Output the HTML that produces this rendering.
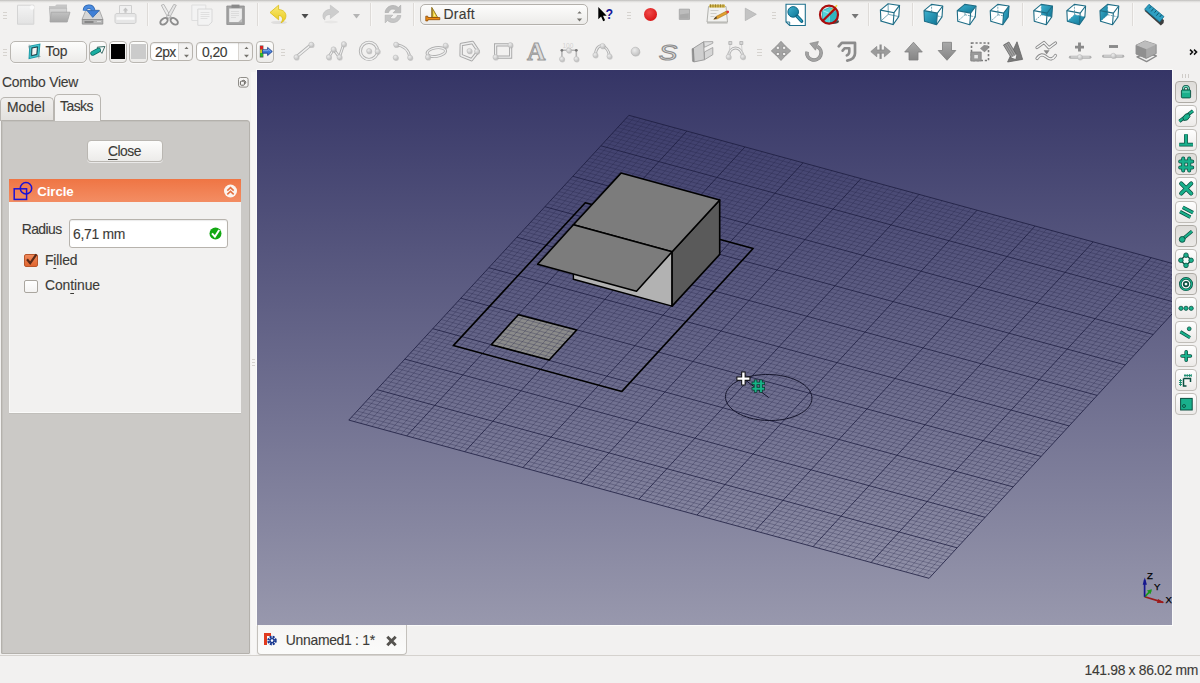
<!DOCTYPE html>
<html lang="en">
<head>
<meta charset="utf-8">
<title>FreeCAD - Draft Circle</title>
<style>
html,body{margin:0;padding:0;}
body{width:1200px;height:683px;overflow:hidden;background:#f2f1f0;position:relative;
 font-family:"Liberation Sans","DejaVu Sans",sans-serif;font-size:14.5px;color:#3c3b37;}
.abs{position:absolute;}
svg{position:absolute;display:block;overflow:visible;}
.vp{overflow:hidden;}
.t{position:absolute;white-space:nowrap;line-height:18px;height:18px;color:#3c3b37;-webkit-text-stroke:0.12px #3c3b37;}
.topline{left:0;top:0;width:1200px;height:1px;background:#dcdad7;}
.sep{position:absolute;width:1px;height:23px;background:#dedbd8;box-shadow:1px 0 0 #f8f7f6;}
.vp{left:257px;top:70px;}
/* dock */
.pane{left:1px;top:120px;width:249px;height:534px;box-sizing:border-box;background:#cbc9c6;border:1px solid #b4b1ac;border-radius:0 3px 1px 1px;box-shadow:inset 1px 1px 0 #c2c0bc;}
.tab{position:absolute;box-sizing:border-box;border:1px solid #b9b6b1;border-bottom:none;border-radius:5px 5px 0 0;}
.tab.off{left:0;top:97px;width:54px;height:24px;background:linear-gradient(#f0efed,#e2e0dd);}
.tab.on{left:54px;top:94px;width:47px;height:27px;background:#f5f4f3;}
.btn{position:absolute;box-sizing:border-box;border:1px solid #bab7b2;border-radius:4px;background:linear-gradient(#fdfdfc,#ecebe9);box-shadow:0 1px 0 rgba(255,255,255,.6);}
.hdr{left:9px;top:179px;width:232px;height:23px;background:linear-gradient(#ef7544,#f38d63);}
.grp{left:9px;top:202px;width:232px;height:211px;box-sizing:border-box;background:#f2f1f0;border-bottom:1px solid #fbfbfa;border-left:1px solid #f8f8f7;box-shadow:0 1px 0 #c1bfbb;}
.edit{position:absolute;box-sizing:border-box;background:#fff;border:1px solid #b7b3ad;border-radius:3px;box-shadow:inset 0 1px 1px rgba(0,0,0,.08);}
.chk{position:absolute;box-sizing:border-box;width:14px;height:14px;border:1px solid #aaa69f;border-radius:2px;background:linear-gradient(#fff,#f4f3f2);}
.doctab{left:257px;top:625px;width:150px;height:30px;box-sizing:border-box;border:1px solid #c4c1bc;border-top:none;border-radius:0 0 4px 4px;background:linear-gradient(#f6f5f4,#fbfbfa);}
.statusline{left:0;top:655px;width:1200px;height:1px;background:#d5d2ce;}
.tbb{position:absolute;box-sizing:border-box;width:24px;height:23px;border:1px solid #c0bdb8;border-radius:4px;background:linear-gradient(#fefefe,#eceae8);}
.tbb.dn{background:linear-gradient(#dedcd9,#ebe9e7);border-color:#aeaba5;}
.grip{position:absolute;width:4px;height:7px;background:repeating-linear-gradient(#d6d3cf 0 1px,transparent 1px 3px);}
</style>
</head>
<body>
<div class="abs" style="left:256px;top:69px;width:917px;height:557px;background:#fbfbfa;"></div>
<svg class="vp" width="915" height="555" viewBox="0 0 915 555">
<defs><linearGradient id="bg" x1="0" y1="0" x2="0" y2="1"><stop offset="0" stop-color="#353566"/><stop offset="1" stop-color="#9898ad"/></linearGradient></defs>
<rect width="915" height="555" fill="url(#bg)"/>
<polygon points="261.3,244.7 319.7,260 292.2,290 234.3,274.7" fill="#8b8b8b" stroke="none" stroke-width="0" stroke-linejoin="round" />
<path d="M377.7 46.9L97.6 351.7M369.1 48.3L949.4 206.5M383.5 48.5L103.4 353.3M366.3 51.4L946.6 209.6M389.3 50L109.2 354.8M363.5 54.4L943.8 212.6M395.1 51.6L115 356.4M360.7 57.5L941 215.7M400.9 53.2L120.8 358M357.9 60.5L938.2 218.7M406.7 54.8L126.6 359.6M355.1 63.6L935.4 221.8M412.5 56.4L132.4 361.2M352.3 66.6L932.6 224.8M418.3 58L138.2 362.8M349.5 69.7L929.8 227.9M424.1 59.5L144 364.3M346.7 72.7L927 230.9M435.7 62.7L155.6 367.5M341.1 78.8L921.4 237M441.5 64.3L161.4 369.1M338.3 81.9L918.6 240.1M447.3 65.9L167.2 370.7M335.5 84.9L915.8 243.1M453.1 67.4L173 372.2M332.7 88L913 246.2M458.9 69L178.8 373.8M329.9 91L910.2 249.2M464.7 70.6L184.6 375.4M327.1 94.1L907.4 252.3M470.6 72.2L190.5 377M324.3 97.1L904.6 255.3M476.4 73.8L196.3 378.6M321.5 100.2L901.8 258.4M482.2 75.4L202.1 380.2M318.7 103.2L899 261.4M493.8 78.5L213.7 383.3M313.1 109.3L893.4 267.5M499.6 80.1L219.5 384.9M310.3 112.4L890.6 270.6M505.4 81.7L225.3 386.5M307.5 115.4L887.8 273.6M511.2 83.3L231.1 388.1M304.7 118.5L885 276.7M517 84.8L236.9 389.6M301.9 121.5L882.2 279.7M522.8 86.4L242.7 391.2M299.1 124.5L879.4 282.7M528.6 88L248.5 392.8M296.3 127.6L876.6 285.8M534.4 89.6L254.3 394.4M293.5 130.6L873.8 288.8M540.2 91.2L260.1 396M290.7 133.7L871 291.9M551.8 94.3L271.7 399.1M285.1 139.8L865.4 298M557.6 95.9L277.5 400.7M282.3 142.8L862.6 301M563.4 97.5L283.3 402.3M279.5 145.9L859.8 304.1M569.2 99.1L289.1 403.9M276.7 148.9L857 307.1M575 100.7L294.9 405.5M273.9 152L854.2 310.2M580.8 102.3L300.7 407.1M271.1 155L851.4 313.2M586.6 103.8L306.5 408.6M268.3 158.1L848.6 316.3M592.4 105.4L312.3 410.2M265.5 161.1L845.8 319.3M598.2 107L318.1 411.8M262.7 164.2L843 322.4M609.8 110.2L329.7 415M257.1 170.3L837.4 328.5M615.6 111.7L335.5 416.5M254.3 173.3L834.6 331.5M621.4 113.3L341.3 418.1M251.5 176.4L831.8 334.6M627.2 114.9L347.1 419.7M248.7 179.4L829 337.6M633 116.5L352.9 421.3M245.9 182.5L826.2 340.7M638.8 118.1L358.7 422.9M243.1 185.5L823.4 343.7M644.6 119.7L364.5 424.5M240.3 188.6L820.6 346.8M650.4 121.2L370.3 426M237.5 191.6L817.8 349.8M656.2 122.8L376.1 427.6M234.7 194.7L815 352.9M667.9 126L387.8 430.8M229 200.7L809.3 358.9M673.7 127.6L393.6 432.4M226.2 203.8L806.5 362M679.5 129.1L399.4 433.9M223.4 206.8L803.7 365M685.3 130.7L405.2 435.5M220.6 209.9L800.9 368.1M691.1 132.3L411 437.1M217.8 212.9L798.1 371.1M696.9 133.9L416.8 438.7M215 216L795.3 374.2M702.7 135.5L422.6 440.3M212.2 219L792.5 377.2M708.5 137.1L428.4 441.9M209.4 222.1L789.7 380.3M714.3 138.6L434.2 443.4M206.6 225.1L786.9 383.3M725.9 141.8L445.8 446.6M201 231.2L781.3 389.4M731.7 143.4L451.6 448.2M198.2 234.3L778.5 392.5M737.5 145L457.4 449.8M195.4 237.3L775.7 395.5M743.3 146.5L463.2 451.3M192.6 240.4L772.9 398.6M749.1 148.1L469 452.9M189.8 243.4L770.1 401.6M754.9 149.7L474.8 454.5M187 246.5L767.3 404.7M760.7 151.3L480.6 456.1M184.2 249.5L764.5 407.7M766.5 152.9L486.4 457.7M181.4 252.6L761.7 410.8M772.3 154.5L492.2 459.3M178.6 255.6L758.9 413.8M783.9 157.6L503.8 462.4M173 261.7L753.3 419.9M789.7 159.2L509.6 464M170.2 264.8L750.5 423M795.5 160.8L515.4 465.6M167.4 267.8L747.7 426M801.3 162.4L521.2 467.2M164.6 270.9L744.9 429.1M807.1 163.9L527 468.8M161.8 273.9L742.1 432.1M812.9 165.5L532.8 470.3M159 276.9L739.3 435.1M818.7 167.1L538.6 471.9M156.2 280L736.5 438.2M824.5 168.7L544.4 473.5M153.4 283L733.7 441.2M830.3 170.3L550.2 475.1M150.6 286.1L730.9 444.3M841.9 173.4L561.8 478.2M145 292.2L725.3 450.4M847.7 175L567.6 479.8M142.2 295.2L722.5 453.4M853.5 176.6L573.4 481.4M139.4 298.3L719.7 456.5M859.4 178.2L579.3 483M136.6 301.3L716.9 459.5M865.2 179.8L585.1 484.6M133.8 304.4L714.1 462.6M871 181.4L590.9 486.2M131 307.4L711.3 465.6M876.8 182.9L596.7 487.7M128.2 310.5L708.5 468.7M882.6 184.5L602.5 489.3M125.4 313.5L705.7 471.7M888.4 186.1L608.3 490.9M122.6 316.6L702.9 474.8M900 189.3L619.9 494.1M117 322.7L697.3 480.9M905.8 190.8L625.7 495.6M114.2 325.7L694.5 483.9M911.6 192.4L631.5 497.2M111.4 328.8L691.7 487M917.4 194L637.3 498.8M108.6 331.8L688.9 490M923.2 195.6L643.1 500.4M105.8 334.9L686.1 493.1M929 197.2L648.9 502M103 337.9L683.3 496.1M934.8 198.8L654.7 503.6M100.2 341L680.5 499.2M940.6 200.3L660.5 505.1M97.4 344L677.7 502.2M946.4 201.9L666.3 506.7M94.6 347.1L674.9 505.3" stroke="#232346" stroke-opacity="0.45" stroke-width="0.7" fill="none"/>
<path d="M371.9 45.3L91.8 350.1M371.9 45.3L952.2 203.5M429.9 61.1L149.8 365.9M343.9 75.8L924.2 234M488 76.9L207.9 381.7M315.9 106.3L896.2 264.5M546 92.8L265.9 397.6M287.9 136.7L868.2 294.9M604 108.6L323.9 413.4M259.9 167.2L840.2 325.4M662 124.4L381.9 429.2M231.8 197.7L812.1 355.9M720.1 140.2L440 445M203.8 228.2L784.1 386.4M778.1 156L498 460.8M175.8 258.7L756.1 416.9M836.1 171.9L556 476.7M147.8 289.1L728.1 447.3M894.2 187.7L614.1 492.5M119.8 319.6L700.1 477.8M952.2 203.5L672.1 508.3M91.8 350.1L672.1 508.3" stroke="#1d1d40" stroke-opacity="0.8" stroke-width="1" fill="none"/>
<polygon points="261.3,244.7 319.7,260 292.2,290 234.3,274.7" fill="none" stroke="#000" stroke-width="1.6" stroke-linejoin="round" />
<polygon points="328.3,132.8 496.1,178.5 364.9,321.4 196.3,275.6" fill="none" stroke="#000" stroke-width="1.6" stroke-linejoin="round" />
<polygon points="316.4,154.8 415.1,181.7 415.1,236.1 316.4,209.2" fill="#b2b2b2" stroke="#000" stroke-width="1.4" stroke-linejoin="round" />
<polygon points="415.1,181.7 462.7,130 462.7,184.4 415.1,236.1" fill="#5a5a5a" stroke="#000" stroke-width="1.6" stroke-linejoin="round" />
<polygon points="364,103.1 462.7,130 415.1,181.7 316.4,154.8" fill="#7c7c7c" stroke="#000" stroke-width="1.6" stroke-linejoin="round" />
<polygon points="316.4,154.8 415.1,181.7 379.5,221.3 280.6,194.3" fill="#7c7c7c" stroke="#000" stroke-width="1.6" stroke-linejoin="round" />
<polygon points="550.6,338.1 548.9,339.9 546.8,341.5 544.4,343 541.9,344.5 539,345.8 536,346.9 532.8,347.9 529.4,348.8 525.9,349.5 522.3,350 518.6,350.3 514.9,350.5 511.1,350.5 507.4,350.3 503.6,350 500,349.5 496.4,348.8 492.9,348 489.6,346.9 486.4,345.8 483.5,344.5 480.7,343.1 478.2,341.5 476,339.9 474,338.2 472.3,336.3 470.9,334.5 469.8,332.5 469,330.5 468.6,328.5 468.5,326.5 468.7,324.5 469.2,322.5 470.1,320.6 471.3,318.7 472.8,316.9 474.5,315.1 476.6,313.5 479,312 481.5,310.5 484.4,309.2 487.4,308.1 490.6,307.1 494,306.2 497.5,305.5 501.1,305 504.8,304.7 508.5,304.5 512.3,304.5 516,304.7 519.8,305 523.4,305.5 527,306.2 530.5,307 533.8,308.1 537,309.2 539.9,310.5 542.7,311.9 545.2,313.5 547.4,315.1 549.4,316.8 551.1,318.7 552.5,320.5 553.6,322.5 554.4,324.5 554.8,326.5 554.9,328.5 554.7,330.5 554.2,332.5 553.3,334.4 552.1,336.3" fill="none" stroke="#15152c" stroke-width="1" stroke-linejoin="round" />
<line x1="511.7" y1="327.5" x2="487.5" y2="309.5" stroke="#15152c" stroke-width="1"/>
<g transform="translate(501.3 316.1)" stroke-linecap="square" fill="none"><path d="M-2.7 -5V5M2.7 -5V5M-5 -2.7H5M-5 2.7H5" stroke="#0b3b2e" stroke-width="3.4"/><path d="M-2.7 -5V5M2.7 -5V5M-5 -2.7H5M-5 2.7H5" stroke="#19b389" stroke-width="1.9"/></g>
<g transform="translate(486.4 308.6)" fill="none" stroke-linecap="butt"><path d="M0 -7V7M-7 0H7" stroke="#111" stroke-width="4.4"/><path d="M0 -6V6M-6 0H6" stroke="#fff" stroke-width="2.4"/></g>
<g transform="translate(887.6 526.8)" font-family="'Liberation Sans', sans-serif" font-size="9.6" fill="#000" stroke="#000" stroke-width=".25"><path d="M0 0L18.6 5.6" stroke="#9c1a1a" stroke-width="1.7"/><path d="M19.6 5.9l-7.2 0.2 1.1-3.9z" fill="#9c1a1a" stroke="none"/><path d="M0 0L6.4 -6.4" stroke="#1a9a1a" stroke-width="1.7"/><path d="M7.4 -7.6l-1.6 5-3.4-3.6z" fill="#1a9a1a" stroke="none"/><path d="M0 0V-17" stroke="#17178f" stroke-width="1.7"/><path d="M0.2 -19.4l2.1 7.4h-4.2z" fill="#17178f" stroke="none"/><text x="2.3" y="-17.6">Z</text><text x="9.3" y="-6.6">Y</text><text x="20.9" y="6">X</text></g>
</svg>
<!-- ===== Combo View dock ===== -->
<div class="t" id="t_combo" style="left:2px;top:72.6px;font-size:13.9px;letter-spacing:-0.25px;">Combo View</div>
<svg style="left:237.5px;top:76.5px" width="11" height="11" viewBox="0 0 11 11"><rect x=".5" y=".5" width="9.6" height="9.6" rx="2" fill="#f6f5f4" stroke="#85827d" stroke-width=".9"/><rect x="2.4" y="4.2" width="4" height="4" rx=".8" fill="none" stroke="#66635f" stroke-width="1"/><path d="M4.3 3.6a2.3 2.3 0 0 1 3.2 3" fill="none" stroke="#66635f" stroke-width="1"/></svg>
<div class="tab off"></div>
<div class="abs pane"></div>
<div class="tab on"></div>
<div class="t" id="t_model" style="left:7px;top:97.8px;font-size:13.9px;letter-spacing:0.03px;">Model</div>
<div class="t" id="t_tasks" style="left:60px;top:97.4px;font-size:13.9px;letter-spacing:-0.5px;">Tasks</div>
<div class="btn" style="left:87px;top:140px;width:76px;height:22px;"></div>
<div class="t" id="t_close" style="left:108px;top:142px;font-size:13.9px;letter-spacing:-0.51px;"><span style="text-decoration:underline;text-underline-offset:3px;">C</span>lose</div>
<div class="abs hdr"></div>
<svg style="left:12px;top:180px" width="24" height="22" viewBox="0 0 24 22"><rect x="2.2" y="8.8" width="12.4" height="10.6" fill="none" stroke="#1a12d8" stroke-width="1.5"/><circle cx="14" cy="8.3" r="5.7" fill="none" stroke="#1a12d8" stroke-width="1.5"/></svg>
<div class="t" id="t_circle" style="left:37.2px;top:182.5px;font-size:13.3px;font-weight:bold;color:#fff;-webkit-text-stroke:0;letter-spacing:-0.09px;">Circle</div>
<svg style="left:223px;top:184px" width="15" height="15" viewBox="0 0 15 15"><circle cx="7.5" cy="7" r="6.5" fill="#fbf3ee"/><path d="M4.3 6.6L7.5 3.6l3.2 3M4.3 10.4l3.2-3 3.2 3" fill="none" stroke="#e46f3e" stroke-width="1.5"/></svg>
<div class="abs grp"></div>
<div class="t" id="t_radius" style="left:21.7px;top:220.1px;font-size:13.9px;letter-spacing:-0.54px;">Radius</div>
<div class="edit" style="left:69px;top:219px;width:159px;height:29px;"></div>
<div class="t" id="t_val" style="left:73.1px;top:225px;font-size:13.9px;letter-spacing:-0.32px;">6,71 mm</div>
<svg style="left:209px;top:227px" width="13" height="13" viewBox="0 0 13 13"><circle cx="6.5" cy="6.5" r="6" fill="#12a812"/><path d="M3 6.3l2.9 3.4L10.2 3" fill="none" stroke="#fff" stroke-width="2"/></svg>
<div class="chk" style="left:24px;top:253.5px;width:13.5px;height:13.5px;background:linear-gradient(#f08a5c,#e0652f);border-color:#b9562b;"></div>
<svg style="left:24px;top:252px" width="15" height="15" viewBox="0 0 15 15"><path d="M3 7.2l3.2 4L12.4 2.4" fill="none" stroke="#5a2a18" stroke-width="2.2"/></svg>
<div class="t" id="t_filled" style="left:45px;top:250.7px;font-size:13.9px;letter-spacing:-0.15px;">F<span style="text-decoration:underline;text-underline-offset:3px;">i</span>lled</div>
<div class="chk" style="left:24px;top:279.5px;width:13.5px;height:13.5px;"></div>
<div class="t" id="t_cont" style="left:45px;top:276.2px;font-size:13.9px;letter-spacing:-0.08px;">Con<span style="text-decoration:underline;text-underline-offset:3px;">t</span>inue</div>
<div class="abs" style="left:251px;top:72px;width:5px;height:583px;background:#f7f6f5;"></div>
<div class="grip" style="left:252px;top:359px;width:3px;height:8px;"></div>
<!-- ===== document tab + status bar ===== -->
<div class="abs doctab"></div>
<svg style="left:263px;top:632px" width="15" height="15" viewBox="0 0 15 15"><path d="M1 1h7v3H4v9H1z" fill="#e03a1e"/><g transform="translate(9 8.6)"><circle r="3.6" fill="none" stroke="#15358f" stroke-width="2.4" stroke-dasharray="1.9 0.95"/><circle r="2.6" fill="#15358f"/><circle r="1.3" fill="#fff"/></g></svg>
<div class="t" id="t_doc" style="left:285.8px;top:631.2px;font-size:13.9px;letter-spacing:-0.28px;">Unnamed1 : 1*</div>
<svg style="left:385px;top:635px" width="13" height="12" viewBox="0 0 13 12"><path d="M2.3 1.8l8.4 8.4M10.7 1.8l-8.4 8.4" stroke="#55534f" stroke-width="2.9" fill="none"/></svg>
<div class="abs statusline"></div>
<div class="t" id="t_status" style="top:660.7px;font-size:13.9px;letter-spacing:-0.32px;left:1084.5px;">141.98 x 86.02 mm</div>
<!-- ===== toolbar row 1 ===== -->
<div class="abs" style="left:0;top:0;width:1200px;height:3px;background:linear-gradient(#bcbbb9,#dddcda 40%,#f2f1f0);"></div>
<div class="grip" style="left:3px;top:12px;"></div>
<div class="grip" style="left:627px;top:12px;"></div>
<div class="grip" style="left:772px;top:12px;"></div>
<div class="sep" style="left:147px;top:3px;"></div>
<div class="sep" style="left:257px;top:3px;"></div>
<div class="sep" style="left:370px;top:3px;"></div>
<div class="sep" style="left:413px;top:3px;"></div>
<div class="sep" style="left:868px;top:3px;"></div>
<div class="sep" style="left:912px;top:3px;"></div>
<div class="sep" style="left:1022px;top:3px;"></div>
<div class="sep" style="left:1132px;top:3px;"></div>
<svg style="left:0;top:0" width="1200" height="32" viewBox="0 0 1200 32">
<defs>
<linearGradient id="gl" x1="0" y1="0" x2="0" y2="1"><stop offset="0" stop-color="#f4f4f4"/><stop offset="1" stop-color="#e2e2e2"/></linearGradient>
<linearGradient id="gg" x1="0" y1="0" x2="0" y2="1"><stop offset="0" stop-color="#c2c2c2"/><stop offset="1" stop-color="#a6a6a6"/></linearGradient>
<linearGradient id="teal" x1="0" y1="0" x2="1" y2="1"><stop offset="0" stop-color="#3fb2d0"/><stop offset="1" stop-color="#0f7595"/></linearGradient>
<linearGradient id="yel" x1="0" y1="0" x2="0" y2="1"><stop offset="0" stop-color="#f9ea7a"/><stop offset="1" stop-color="#e9c916"/></linearGradient>
<radialGradient id="red" cx="0.4" cy="0.35" r="0.7"><stop offset="0" stop-color="#f04a4a"/><stop offset="1" stop-color="#d81414"/></radialGradient>
</defs>
<!-- new -->
<path d="M17.5 5.2h16.3v19H17.5z" fill="url(#gl)" stroke="#d4d4d4"/><circle cx="32" cy="7.5" r="2.2" fill="#fafafa"/>
<!-- open -->
<path d="M49 6h6l1.5-1.5H67V9h-18z" fill="#c6c6c6"/><path d="M49.4 8.2h17.2V21H50.4z" fill="#d2d2d2" stroke="#b8b8b8" stroke-width=".8"/><path d="M51.2 12.2H70L67.2 22H50z" fill="url(#gg)" stroke="#a4a4a4" stroke-width=".8"/>
<!-- save -->
<path d="M85.8 10.2h13.6l3.6 9.3H82z" fill="#d6d6d6" stroke="#9c9c9c" stroke-width=".8"/><path d="M82.3 19.5h20.5v4.6H82.3z" fill="#b4b4b4" stroke="#8c8c8c" stroke-width=".8"/><path d="M84.5 22h9" stroke="#6e6e6e" stroke-width="1.3"/><path d="M97 21.5h4" stroke="#d8d8d8" stroke-width="1"/>
<path d="M84.8 10.6C85 6 91.8 4.6 93.3 10.4" fill="none" stroke="#2d64ad" stroke-width="4.2"/><path d="M84.8 10.6C85 6 91.8 4.6 93.3 10.4" fill="none" stroke="#4a8be0" stroke-width="2.8"/>
<path d="M87 10.6h12.2l-6.4 6.8z" fill="#3f7fd6" stroke="#2d64ad" stroke-width=".8" stroke-linejoin="round"/>
<!-- print -->
<path d="M119.5 5.5h12v8.5h-12z" fill="#f0f0f0" stroke="#d0d0d0"/><path d="M125.5 7.5l2.7 3h-1.6v2.2h-2.2v-2.2h-1.6z" fill="#c4c4c4"/><path d="M117 13.5h17c1.5 0 2 1 2 2v6c0 1.2-.8 2-2 2h-17c-1.2 0-2-.8-2-2v-6c0-1 .5-2 2-2z" fill="#e6e6e6" stroke="#cfcfcf"/><path d="M116.5 18.5h18" stroke="#fafafa" stroke-width="2.5"/>
<!-- cut -->
<path d="M161.3 5.2L163.8 4.4 171.2 17.2 168.3 18.3z" fill="#ececec" stroke="#a9a9a9" stroke-width=".8" stroke-linejoin="round"/>
<path d="M176.3 5.2L173.8 4.4 166.4 17.2 169.3 18.3z" fill="#e4e4e4" stroke="#a9a9a9" stroke-width=".8" stroke-linejoin="round"/>
<ellipse cx="164" cy="21.3" rx="4.1" ry="2.7" transform="rotate(-38 164 21.3)" fill="none" stroke="#8d8d8d" stroke-width="2"/><ellipse cx="174.2" cy="21.3" rx="4.1" ry="2.7" transform="rotate(38 174.2 21.3)" fill="none" stroke="#8d8d8d" stroke-width="2"/>
<circle cx="168.8" cy="15.3" r=".8" fill="#999"/>
<!-- copy -->
<path d="M191.8 5h14v15.5h-14z" fill="#f3f3f3" stroke="#dedede"/><path d="M197.8 9h14.2v13l-3.5 3.3H197.8z" fill="#f3f3f3" stroke="#d8d8d8"/><path d="M200.5 12.5h9M200.5 14.5h9M200.5 16.5h9M200.5 18.5h7" stroke="#e0e0e0"/>
<!-- paste -->
<path d="M226.8 6h17.5v18.5h-17.5z" fill="#a2a2a2" stroke="#8e8e8e" stroke-width=".8"/><path d="M229.2 8.5h12.7v13.6h-12.7z" fill="#ededed"/><path d="M231.5 4.6h8v3.3h-8z" fill="#8a8a8a"/><path d="M231 11.5h8M231 13.5h8M231 15.5h8M231 17.5h5" stroke="#dcdcdc"/><path d="M241.9 18.5v3.6h-3.6z" fill="#bdbdbd"/>
<!-- undo -->
<ellipse cx="279" cy="22.5" rx="8" ry="1.6" fill="#000" opacity=".08"/>
<path d="M278.6 5.2v4.3c5.4.3 8.3 4 7 8.3-.6 2-2 3.7-4.6 5 1.5-2 1.9-3.9 1-5.4-.7-1.3-1.7-1.8-3.4-1.9v4.3L270 12.5z" fill="url(#yel)" stroke="#dcbc14" stroke-width=".8" stroke-linejoin="round"/>
<path d="M301.5 14h7l-3.5 4.6z" fill="#4c4c4c"/>
<!-- redo -->
<ellipse cx="331" cy="22" rx="7" ry="1.4" fill="#000" opacity=".04"/>
<path d="M330.4 5.2v4.1c-5 .3-8.3 3.8-7.3 8.2.2 1 .9 2 1.7 2.5-.3-3.4 1.6-5.4 5.6-5.6v4.1L339 11.8z" fill="#cdcdcd" stroke="#c0c0c0" stroke-width=".6" stroke-linejoin="round"/>
<path d="M353 14h7l-3.5 4.6z" fill="#b4b4b4"/>
<!-- refresh -->
<path d="M385 12.5c.8-4.5 4-7 8-7 2.3 0 4 .8 5.3 2.1l2.4-2.4v7.6h-7.6l2.6-2.6c-.8-.8-1.7-1.1-2.8-1.1-2.2 0-3.7 1.3-4.3 3.4z" fill="#bcbcbc" stroke="#adadad" stroke-width=".7"/>
<path d="M400.9 15.5c-.8 4.5-4 7-8 7-2.3 0-4-.8-5.3-2.1l-2.4 2.4v-7.6h7.6l-2.6 2.6c.8.8 1.7 1.1 2.8 1.1 2.2 0 3.7-1.3 4.3-3.4z" fill="#c6c6c6" stroke="#b4b4b4" stroke-width=".7"/>
<!-- whatsthis -->
<path d="M598.3 7v12.2l2.8-2.6 2.1 4.6 1.9-.9-2.1-4.5h3.7z" fill="#000"/>
<text x="605.4" y="19" font-family="'Liberation Sans',sans-serif" font-weight="bold" font-size="15.5" fill="#17179a" textLength="7.6" lengthAdjust="spacingAndGlyphs">?</text>
<!-- macro record / stop / edit / play -->
<circle cx="650.5" cy="14.4" r="6.5" fill="url(#red)"/>
<path d="M679.3 9.2h10.2v10.2h-10.2z" fill="#bdbdbd" stroke="#a6a6a6" stroke-width=".9"/><path d="M680 14.5l8.8-1.2v5.4H680z" fill="#aaa"/>
<path d="M708.5 6.5h17.5l1.5 15.5h-20.5z" fill="#f1f1ef" stroke="#a9a9a5" stroke-width=".9"/><path d="M707 22h20.5v1.6H707z" fill="#bcbcb8"/><path d="M709.3 4.6h15.7v3h-15.7z" fill="#d2b54a"/><path d="M710.5 4.3v3M713 4.3v3M715.5 4.3v3M718 4.3v3M720.5 4.3v3M723 4.3v3" stroke="#8d7420" stroke-width=".8"/>
<path d="M710.5 10.5h8M710.5 13.5h6M710.5 16.5h4" stroke="#c9c9c5" stroke-width=".9"/>
<path d="M713.8 19.3l2.3-2.8 10-5.2 1.2 2.3-10 5.2z" fill="#e2a12d" stroke="#a86e12" stroke-width=".6"/><path d="M726.1 11.3l1.2 2.3 1.2-.7c.6-.4.7-1 .4-1.6-.3-.6-1-.9-1.6-.6z" fill="#e03a3a"/><path d="M713.8 19.3l2.3-2.8.9 1.8z" fill="#333"/>
<path d="M745.3 8.2l11 6.1-11 6.3z" fill="#c3c3c3" stroke="#b2b2b2" stroke-width=".8"/>
<!-- zoom fit -->
<path d="M786 4.3h19.3v21.2h-15.6L786 22z" fill="#fff" stroke="#1d6f8c" stroke-width="1.1"/><path d="M786 22l3.7 0 0 3.5" fill="none" stroke="#1d6f8c" stroke-width=".9"/>
<circle cx="793.2" cy="11.9" r="5.3" fill="url(#teal)" stroke="#0e6482" stroke-width="1"/><path d="M797 16.2l4.6 5" stroke="#0e6482" stroke-width="3.4" stroke-linecap="round"/><path d="M797.3 16.5l4 4.4" stroke="#2a9bbb" stroke-width="1.6" stroke-linecap="round"/>
<!-- draw style -->
<ellipse cx="833" cy="21.5" rx="6" ry="2.6" fill="#1a1a1a" opacity=".8"/>
<path d="M822.5 10.5l7-3 8 2.5v10.5l-8 3.5-7-3.5z" fill="#53d3d9" stroke="#1a9aa6" stroke-width=".7"/><path d="M822.5 10.5l7 3 8-3.5M829.5 13.5V24" fill="none" stroke="#bff3f5" stroke-width=".8"/><path d="M829.5 13.5l8-3.5v10.5l-8 3.5z" fill="#2fb5c0"/>
<path d="M830.5 12l6.5-6.8" stroke="#f0d63a" stroke-width="1.6"/>
<circle cx="829" cy="14.7" r="9" fill="none" stroke="#a90e0e" stroke-width="2.2"/><path d="M822.6 21l12.8-12.6" stroke="#a90e0e" stroke-width="2.2"/>
<path d="M851.6 14h7.1l-3.55 4.6z" fill="#767676"/>
<!-- ruler -->
<path d="M1144.5 10.8l2.4-2.4 17 11.5-.3 3.2-2.8 2.3z" fill="#3d3d3d"/><path d="M1144.6 9.3l4.4-5 15 12.3-4.3 5.3z" fill="#2e9fc2" stroke="#156f8e" stroke-width=".8"/><path d="M1151 6.4l-1.7 2M1153.6 8.5l-2.4 2.9M1156.2 10.7l-1.7 2M1158.8 12.8l-2.4 2.9M1161.4 15l-1.7 2" stroke="#0d4a60" stroke-width=".9"/>
<!-- view cubes -->
<g transform="translate(877.6 -0.7) scale(1.02)"><polygon points="2.75,10.6 10.25,4.4 21.5,6 20.75,16.9 15.25,24.75 3.25,21.25" fill="#fff" stroke="none"/><path d="M10.5 14.75 L10.25 4.4 M10.5 14.75 L20.75 16.9 M10.5 14.75 L3.25 21.25" fill="none" stroke="#3b8298" stroke-width=".7" /><polygon points="2.75,10.6 10.25,4.4 21.5,6 20.75,16.9 15.25,24.75 3.25,21.25" fill="none" stroke="#1e6d86" stroke-width="1.1"/><path d="M2.75 10.6 L16.1 13.1 L15.25 24.75 M16.1 13.1 L21.5 6" fill="none" stroke="#1e6d86" stroke-width="1.1"/></g>
<g transform="translate(921.25 0)" stroke-linejoin="round"><polygon points="2.75,10.6 10.25,4.4 21.5,6 20.75,16.9 15.25,24.75 3.25,21.25" fill="#fff" stroke="none"/><path d="M10.5 14.75 L10.25 4.4 M10.5 14.75 L20.75 16.9 M10.5 14.75 L3.25 21.25" fill="none" stroke="#3b8298" stroke-width=".7" stroke-dasharray="2 1"/><polygon points="2.75,10.6 16.1,13.1 15.25,24.75 3.25,21.25" fill="url(#teal)" stroke="none"/><polygon points="2.75,10.6 10.25,4.4 21.5,6 20.75,16.9 15.25,24.75 3.25,21.25" fill="none" stroke="#1e6d86" stroke-width="1.1"/><path d="M2.75 10.6 L16.1 13.1 L15.25 24.75 M16.1 13.1 L21.5 6" fill="none" stroke="#1e6d86" stroke-width="1.1"/></g>
<g transform="translate(954.5 0)" stroke-linejoin="round"><polygon points="2.75,10.6 10.25,4.4 21.5,6 20.75,16.9 15.25,24.75 3.25,21.25" fill="#fff" stroke="none"/><path d="M10.5 14.75 L10.25 4.4 M10.5 14.75 L20.75 16.9 M10.5 14.75 L3.25 21.25" fill="none" stroke="#3b8298" stroke-width=".7" stroke-dasharray="2 1"/><polygon points="2.75,10.6 16.1,13.1 21.5,6 10.25,4.4" fill="url(#teal)" stroke="none"/><polygon points="2.75,10.6 10.25,4.4 21.5,6 20.75,16.9 15.25,24.75 3.25,21.25" fill="none" stroke="#1e6d86" stroke-width="1.1"/><path d="M2.75 10.6 L16.1 13.1 L15.25 24.75 M16.1 13.1 L21.5 6" fill="none" stroke="#1e6d86" stroke-width="1.1"/></g>
<g transform="translate(987.5 0)" stroke-linejoin="round"><polygon points="2.75,10.6 10.25,4.4 21.5,6 20.75,16.9 15.25,24.75 3.25,21.25" fill="#fff" stroke="none"/><path d="M10.5 14.75 L10.25 4.4 M10.5 14.75 L20.75 16.9 M10.5 14.75 L3.25 21.25" fill="none" stroke="#3b8298" stroke-width=".7" stroke-dasharray="2 1"/><polygon points="16.1,13.1 21.5,6 20.75,16.9 15.25,24.75" fill="url(#teal)" stroke="none"/><polygon points="2.75,10.6 10.25,4.4 21.5,6 20.75,16.9 15.25,24.75 3.25,21.25" fill="none" stroke="#1e6d86" stroke-width="1.1"/><path d="M2.75 10.6 L16.1 13.1 L15.25 24.75 M16.1 13.1 L21.5 6" fill="none" stroke="#1e6d86" stroke-width="1.1"/></g>
<g transform="translate(1031 0)" stroke-linejoin="round"><polygon points="2.75,10.6 10.25,4.4 21.5,6 20.75,16.9 15.25,24.75 3.25,21.25" fill="#fff" stroke="none"/><path d="M10.5 14.75 L10.25 4.4 M10.5 14.75 L20.75 16.9 M10.5 14.75 L3.25 21.25" fill="none" stroke="#3b8298" stroke-width=".7" stroke-dasharray="2 1"/><polygon points="10.25,4.4 21.5,6 20.75,16.9 10.5,14.75" fill="url(#teal)" stroke="none"/><polygon points="2.75,10.6 10.25,4.4 21.5,6 20.75,16.9 15.25,24.75 3.25,21.25" fill="none" stroke="#1e6d86" stroke-width="1.1"/><path d="M2.75 10.6 L16.1 13.1 L15.25 24.75 M16.1 13.1 L21.5 6" fill="none" stroke="#1e6d86" stroke-width="1.1"/></g>
<g transform="translate(1064.1 0)" stroke-linejoin="round"><polygon points="2.75,10.6 10.25,4.4 21.5,6 20.75,16.9 15.25,24.75 3.25,21.25" fill="#fff" stroke="none"/><path d="M10.5 14.75 L10.25 4.4 M10.5 14.75 L20.75 16.9 M10.5 14.75 L3.25 21.25" fill="none" stroke="#3b8298" stroke-width=".7" stroke-dasharray="2 1"/><polygon points="3.25,21.25 15.25,24.75 20.75,16.9 10.5,14.75" fill="url(#teal)" stroke="none"/><polygon points="2.75,10.6 10.25,4.4 21.5,6 20.75,16.9 15.25,24.75 3.25,21.25" fill="none" stroke="#1e6d86" stroke-width="1.1"/><path d="M2.75 10.6 L16.1 13.1 L15.25 24.75 M16.1 13.1 L21.5 6" fill="none" stroke="#1e6d86" stroke-width="1.1"/></g>
<g transform="translate(1097.25 0)" stroke-linejoin="round"><polygon points="2.75,10.6 10.25,4.4 21.5,6 20.75,16.9 15.25,24.75 3.25,21.25" fill="#fff" stroke="none"/><path d="M10.5 14.75 L10.25 4.4 M10.5 14.75 L20.75 16.9 M10.5 14.75 L3.25 21.25" fill="none" stroke="#3b8298" stroke-width=".7" stroke-dasharray="2 1"/><polygon points="2.75,10.6 10.25,4.4 10.5,14.75 3.25,21.25" fill="url(#teal)" stroke="none"/><polygon points="2.75,10.6 10.25,4.4 21.5,6 20.75,16.9 15.25,24.75 3.25,21.25" fill="none" stroke="#1e6d86" stroke-width="1.1"/><path d="M2.75 10.6 L16.1 13.1 L15.25 24.75 M16.1 13.1 L21.5 6" fill="none" stroke="#1e6d86" stroke-width="1.1"/></g>
</svg>
<!-- workbench combo -->
<div class="btn" style="left:420px;top:4px;width:168px;height:21px;border-radius:5px;border-color:#b3b0ab;"></div>
<svg style="left:425px;top:6px" width="16" height="16" viewBox="0 0 16 16"><path d="M6.8 1v11" stroke="#8a6d1a" stroke-width="1"/><path d="M7.3 2.2l5.4 9.3H7.3z" fill="#efd23e" stroke="#8a6d1a" stroke-width=".9"/><path d="M9 7.5l1.2 2.2H9z" fill="#fff7c8"/><path d="M.8 10.2h2v1.3h12v2.2H2.8v1.2h-2z" fill="#f08c12" stroke="#8a4a05" stroke-width=".8"/></svg>
<div class="t" id="t_draft" style="left:443.5px;top:5.1px;font-size:13.9px;letter-spacing:0.28px;">Draft</div>
<svg style="left:575px;top:9px" width="9" height="14" viewBox="0 0 9 14"><path d="M2.3 4.6L4.5 2.2l2.2 2.4zM1.9 9.6h5.2L4.5 12.4z" fill="#75736e"/></svg>

<!-- ===== toolbar row 2 (Draft tray + tools) ===== -->

<div class="grip" style="left:3px;top:49px;height:7px;"></div>
<div class="grip" style="left:281px;top:49px;height:7px;width:4px;"></div>
<div class="grip" style="left:757px;top:49px;height:7px;width:5px;"></div>
<div class="btn" style="left:10px;top:41px;width:77px;height:22px;border-radius:5px;"></div>
<svg style="left:28px;top:44px" width="14" height="15" viewBox="0 0 14 15"><path d="M2.6 2.8l8.3-1.6-.9 10.4-8 1.8z" fill="none" stroke="#1b98a4" stroke-width="2.8"/><path d="M4 4l5.4-1-.6 7.4-5.2 1.2z" fill="none" stroke="#10323a" stroke-width=".9"/><path d="M2.6 2.8l8.3-1.6-.9 10.4-8 1.8z" fill="none" stroke="#62dde2" stroke-width=".7"/><path d="M1.2 .6v4M.2 2.8h3M10.8 11v3.5M9 12.5h3.5" stroke="#6b8f94" stroke-width=".6"/></svg>
<div class="t" id="t_top" style="left:45.6px;top:42px;font-size:13.9px;letter-spacing:-0.24px;">Top</div>
<div class="btn" style="left:89px;top:41px;width:18px;height:22px;"></div>
<svg style="left:89px;top:41px" width="18" height="22" viewBox="89 41 18 22"><path d="M97.2 47.2L104.9 46.5 101.9 53.4 100.3 51.2 98.6 50z" fill="#f3fbfa" stroke="#2a5c57" stroke-width=".9" stroke-linejoin="round"/><path d="M92.7 53.3L98.6 50.1" stroke="#0d6b63" stroke-width="4.8" stroke-linecap="round"/><path d="M92.7 53.3L98.6 50.1" stroke="#1aaea2" stroke-width="3.3" stroke-linecap="round"/></svg>
<div class="btn" style="left:109px;top:41px;width:18px;height:22px;"></div><div class="abs" style="left:111px;top:44px;width:14px;height:15px;background:#000;"></div>
<div class="btn" style="left:129px;top:41px;width:19px;height:22px;"></div><div class="abs" style="left:131px;top:44px;width:15px;height:15px;background:#cbcbcb;"></div>
<div class="edit" style="left:150px;top:42px;width:43px;height:19px;border-radius:4px;background:linear-gradient(90deg,#fff 0 27px,#d9d6d2 27px 28px,#f3f2f1 28px);"></div>
<div class="t" id="t_px" style="left:155px;top:43px;font-size:13.9px;letter-spacing:-0.6px;">2px</div>
<svg style="left:182px;top:45px" width="9" height="14" viewBox="0 0 9 14"><path d="M2.5 4l2-2.2 2 2.2zM2 9.8h5L4.5 12.4z" fill="#75736e"/></svg>
<div class="edit" style="left:196px;top:42px;width:57px;height:19px;border-radius:4px;background:linear-gradient(90deg,#fff 0 41px,#d9d6d2 41px 42px,#f3f2f1 42px);"></div>
<div class="t" id="t_020" style="left:201.9px;top:43px;font-size:13.9px;letter-spacing:-0.51px;">0,20</div>
<svg style="left:241.5px;top:45px" width="9" height="14" viewBox="0 0 9 14"><path d="M2.5 4l2-2.2 2 2.2zM2 9.8h5L4.5 12.4z" fill="#75736e"/></svg>
<div class="btn" style="left:256px;top:41px;width:18px;height:22px;"></div>
<svg style="left:259px;top:45px" width="14" height="13" viewBox="0 0 14 13"><path d="M.8 .5h3.6v12H.8z" fill="#555"/><path d="M1.3 1h2.6v3.6H1.3z" fill="#e81c1c"/><path d="M1.3 4.6h2.6v3.4H1.3z" fill="#f2e21a"/><path d="M1.3 8h2.6v3.5H1.3z" fill="#27c427"/><path d="M3.3 4.8h5.3V2.4l4.7 4.1-4.7 4.1V8.2H3.3z" fill="#3a76d6" stroke="#153a86" stroke-width=".8" stroke-linejoin="round"/><path d="M4 5.6h5.2V4.2l2.6 2.3" fill="none" stroke="#8db4ee" stroke-width=".8"/></svg>
<svg style="left:0;top:34px" width="1200" height="36" viewBox="0 34 1200 36">
<defs>
<radialGradient id="ball" cx="0.4" cy="0.35" r="0.75"><stop offset="0" stop-color="#ececec"/><stop offset="1" stop-color="#bcbcbc"/></radialGradient>
<linearGradient id="gd" x1="0" y1="0" x2="0" y2="1"><stop offset="0" stop-color="#a9a9a9"/><stop offset="1" stop-color="#858585"/></linearGradient>

</defs>
<g fill="none" stroke-linecap="round">
<!-- line -->
<path d="M296.3 57.1L311.3 44.6" stroke="#b2b2b2" stroke-width="3.2"/><path d="M296.3 57.1L311.3 44.6" stroke="#f0f0f0" stroke-width="1.4"/>
<!-- wire -->
<path d="M328.8 57.1L333.5 49.3 339.4 57.1 343.8 44" stroke="#b2b2b2" stroke-width="2.9"/><path d="M328.8 57.1L333.5 49.3 339.4 57.1 343.8 44" stroke="#f0f0f0" stroke-width="1.1"/>
<!-- circle -->
<circle cx="369" cy="50.9" r="8.6" stroke="#b0b0b0" stroke-width="3.2"/><circle cx="369" cy="50.9" r="8.6" stroke="#f0f0f0" stroke-width="1.4"/>
<!-- arc -->
<path d="M396 44.6Q408 46 410 57.5" stroke="#b2b2b2" stroke-width="2.9"/><path d="M396 44.6Q408 46 410 57.5" stroke="#f0f0f0" stroke-width="1.1"/>
<!-- ellipse -->
<ellipse cx="436.3" cy="52.1" rx="9.3" ry="4.3" transform="rotate(-9 436.3 52.1)" stroke="#b0b0b0" stroke-width="3"/><ellipse cx="436.3" cy="52.1" rx="9.3" ry="4.3" transform="rotate(-9 436.3 52.1)" stroke="#f0f0f0" stroke-width="1.2"/>
<!-- polygon -->
<path d="M461.3 44.5l11.2-2 5.8 8.6-6.8 8.6-10.4-4.2z" stroke="#a9a9a9" stroke-width="3.4" stroke-linejoin="round"/><path d="M461.3 44.5l11.2-2 5.8 8.6-6.8 8.6-10.4-4.2z" stroke="#eee" stroke-width="1.4" stroke-linejoin="round"/>
<!-- rectangle -->
<path d="M495.6 44.8h15v12.4h-15z" stroke="#a9a9a9" stroke-width="3.2"/><path d="M495.6 44.8h15v12.4h-15z" stroke="#eee" stroke-width="1.3"/>
<!-- dimension -->
<path d="M561.9 50.3V59M576.3 50.3V59M561.9 50.3H576.3" stroke="#b5b5b5" stroke-width="1.6"/>
<!-- bspline -->
<path d="M595.3 55C596 47 600 45 602.5 45.9S609 50 609.4 56.3" stroke="#b0b0b0" stroke-width="2.9"/><path d="M595.3 55C596 47 600 45 602.5 45.9S609 50 609.4 56.3" stroke="#f0f0f0" stroke-width="1.1"/>
<!-- bezcurve -->
<path d="M728.5 56.8C729 45 742 45 742.8 56.8" stroke="#b0b0b0" stroke-width="2.9"/><path d="M728.5 56.8C729 45 742 45 742.8 56.8" stroke="#f0f0f0" stroke-width="1.1"/>
<path d="M728.5 56.8L730.3 43M742.8 56.8L741.3 43" stroke="#c9c9c9" stroke-width=".8"/>
</g>
<g transform="translate(296.3 57.1)"><circle cx=".6" cy=".8" r="2.6" fill="#a8a8a8" opacity=".5"/><circle r="2.5" fill="url(#ball)" stroke="#bcbcbc" stroke-width=".5"/></g><g transform="translate(311.3 44.6)"><circle cx=".6" cy=".8" r="2.6" fill="#a8a8a8" opacity=".5"/><circle r="2.5" fill="url(#ball)" stroke="#bcbcbc" stroke-width=".5"/></g>
<g transform="translate(328.8 57.1)"><circle cx=".6" cy=".8" r="2.6" fill="#a8a8a8" opacity=".5"/><circle r="2.5" fill="url(#ball)" stroke="#bcbcbc" stroke-width=".5"/></g><g transform="translate(333.5 49.3)"><circle cx=".6" cy=".8" r="2.6" fill="#a8a8a8" opacity=".5"/><circle r="2.5" fill="url(#ball)" stroke="#bcbcbc" stroke-width=".5"/></g><g transform="translate(339.4 57.1)"><circle cx=".6" cy=".8" r="2.6" fill="#a8a8a8" opacity=".5"/><circle r="2.5" fill="url(#ball)" stroke="#bcbcbc" stroke-width=".5"/></g><g transform="translate(343.8 44)"><circle cx=".6" cy=".8" r="2.6" fill="#a8a8a8" opacity=".5"/><circle r="2.5" fill="url(#ball)" stroke="#bcbcbc" stroke-width=".5"/></g>
<g transform="translate(369 50.9)"><circle cx=".6" cy=".8" r="2.6" fill="#a8a8a8" opacity=".5"/><circle r="2.5" fill="url(#ball)" stroke="#bcbcbc" stroke-width=".5"/></g><g transform="translate(377.5 51.3)"><circle cx=".6" cy=".8" r="2.6" fill="#a8a8a8" opacity=".5"/><circle r="2.5" fill="url(#ball)" stroke="#bcbcbc" stroke-width=".5"/></g>
<g transform="translate(396 44.6)"><circle cx=".6" cy=".8" r="2.6" fill="#a8a8a8" opacity=".5"/><circle r="2.5" fill="url(#ball)" stroke="#bcbcbc" stroke-width=".5"/></g><g transform="translate(395.6 57.5)"><circle cx=".6" cy=".8" r="2.6" fill="#a8a8a8" opacity=".5"/><circle r="2.5" fill="url(#ball)" stroke="#bcbcbc" stroke-width=".5"/></g><g transform="translate(410 57.5)"><circle cx=".6" cy=".8" r="2.6" fill="#a8a8a8" opacity=".5"/><circle r="2.5" fill="url(#ball)" stroke="#bcbcbc" stroke-width=".5"/></g>
<g transform="translate(427.8 57.1)"><circle cx=".6" cy=".8" r="2.6" fill="#a8a8a8" opacity=".5"/><circle r="2.5" fill="url(#ball)" stroke="#bcbcbc" stroke-width=".5"/></g><g transform="translate(445.6 45.5)"><circle cx=".6" cy=".8" r="2.6" fill="#a8a8a8" opacity=".5"/><circle r="2.5" fill="url(#ball)" stroke="#bcbcbc" stroke-width=".5"/></g>
<g transform="translate(469.4 50.9)"><circle cx=".6" cy=".8" r="2.6" fill="#a8a8a8" opacity=".5"/><circle r="2.5" fill="url(#ball)" stroke="#bcbcbc" stroke-width=".5"/></g><g transform="translate(476.9 51.3)"><circle cx=".6" cy=".8" r="2.6" fill="#a8a8a8" opacity=".5"/><circle r="2.5" fill="url(#ball)" stroke="#bcbcbc" stroke-width=".5"/></g>
<g transform="translate(510.3 45)"><circle cx=".6" cy=".8" r="2.6" fill="#a8a8a8" opacity=".5"/><circle r="2.5" fill="url(#ball)" stroke="#bcbcbc" stroke-width=".5"/></g><g transform="translate(495.4 57.1)"><circle cx=".6" cy=".8" r="2.6" fill="#a8a8a8" opacity=".5"/><circle r="2.5" fill="url(#ball)" stroke="#bcbcbc" stroke-width=".5"/></g>
<text x="527" y="59.7" font-family="'Liberation Serif',serif" font-weight="bold" font-size="24.5" fill="#dedede" stroke="#999" stroke-width="1" textLength="18.5" lengthAdjust="spacingAndGlyphs">A</text>
<g transform="translate(561.9 59)"><circle cx=".6" cy=".8" r="2.6" fill="#a8a8a8" opacity=".5"/><circle r="2.5" fill="url(#ball)" stroke="#bcbcbc" stroke-width=".5"/></g><g transform="translate(576.3 59)"><circle cx=".6" cy=".8" r="2.6" fill="#a8a8a8" opacity=".5"/><circle r="2.5" fill="url(#ball)" stroke="#bcbcbc" stroke-width=".5"/></g><g transform="translate(568.8 50.3)"><circle cx=".6" cy=".8" r="2.6" fill="#a8a8a8" opacity=".5"/><circle r="2.5" fill="url(#ball)" stroke="#bcbcbc" stroke-width=".5"/></g>
<circle cx="561.9" cy="50.3" r="1.4" fill="#777"/><circle cx="576.3" cy="50.3" r="1.4" fill="#777"/>
<text x="562.5" y="47.6" font-family="'Liberation Sans',sans-serif" font-size="6.5" fill="#d2d2d2">100</text>
<g transform="translate(595.3 55)"><circle cx=".6" cy=".8" r="2.6" fill="#a8a8a8" opacity=".5"/><circle r="2.5" fill="url(#ball)" stroke="#bcbcbc" stroke-width=".5"/></g><g transform="translate(602.5 45.9)"><circle cx=".6" cy=".8" r="2.6" fill="#a8a8a8" opacity=".5"/><circle r="2.5" fill="url(#ball)" stroke="#bcbcbc" stroke-width=".5"/></g><g transform="translate(609.4 56.3)"><circle cx=".6" cy=".8" r="2.6" fill="#a8a8a8" opacity=".5"/><circle r="2.5" fill="url(#ball)" stroke="#bcbcbc" stroke-width=".5"/></g>
<circle cx="635.9" cy="52.2" r="4.4" fill="#a6a6a6" opacity=".5"/><circle cx="635.4" cy="51.5" r="4.3" fill="url(#ball)" stroke="#b5b5b5" stroke-width=".6"/>
<text x="658.8" y="59.7" font-family="'Liberation Sans',sans-serif" font-style="italic" font-size="22.5" fill="#e4e4e4" stroke="#8e8e8e" stroke-width="1.1" textLength="18.5" lengthAdjust="spacingAndGlyphs">S</text>
<!-- facebinder -->
<path d="M703.6 41.8L712.8 41.6 712.8 43.2 704.4 47.3z" fill="#e0e0e0" stroke="#9a9a9a" stroke-width=".8" stroke-linejoin="round"/>
<path d="M704.5 51.9L712.8 47.5 712.8 54.7 704.4 59.8z" fill="#d6d6d6" stroke="#9a9a9a" stroke-width=".8" stroke-linejoin="round"/>
<path d="M693.3 48.3L703.6 41.8 704.4 59.8 694 61.9z" fill="#cfcfcf" stroke="#969696" stroke-width=".9" stroke-linejoin="round"/>
<path d="M692 48.8L693.4 48.3 694 61.9 692.5 61.3z" fill="#8c8c8c" stroke="#8c8c8c" stroke-width=".6"/>
<g transform="translate(728.5 56.8)"><circle cx=".6" cy=".8" r="2.6" fill="#a8a8a8" opacity=".5"/><circle r="2.5" fill="url(#ball)" stroke="#bcbcbc" stroke-width=".5"/></g><g transform="translate(742.8 56.8)"><circle cx=".6" cy=".8" r="2.6" fill="#a8a8a8" opacity=".5"/><circle r="2.5" fill="url(#ball)" stroke="#bcbcbc" stroke-width=".5"/></g>
<path d="M728.8 41.5h3v3h-3zM739.8 41.5h3v3h-3z" fill="#d6d6d6" stroke="#a7a7a7" stroke-width=".7"/>
<!-- move -->
<path d="M781 41.3l4.6 5h-3v3.1h3.1v-3l5 4.5-5 4.6v-3h-3.1v3h3l-4.6 5-4.6-5h3v-3h-3.1v3l-5-4.6 5-4.5v3h3.1v-3.1h-3z" fill="#a3a3a3" stroke="#8b8b8b" stroke-width=".8" stroke-linejoin="round"/>
<!-- rotate -->
<path d="M807 51.7A7.1 7.1 0 1 0 817.3 46.6" fill="none" stroke="#868686" stroke-width="3.6"/><path d="M807 51.7A7.1 7.1 0 1 0 817.3 46.6" fill="none" stroke="#a2a2a2" stroke-width="2.4"/>
<path d="M809.8 43.4L818.4 41.5 815.5 50.2z" fill="#a0a0a0" stroke="#868686" stroke-width=".7" stroke-linejoin="round"/>
<!-- offset -->
<path d="M838.7 46.3L841.8 42.9H855v10.4c0 4-3 6.5-7.8 7.3" fill="none" stroke="#8c8c8c" stroke-width="2.7" stroke-linejoin="round" stroke-linecap="round"/>
<path d="M842.6 50.7L844.8 48.2h4.5v3.2c0 2-1 3.3-2.5 4" fill="none" stroke="#8c8c8c" stroke-width="2.6" stroke-linejoin="round" stroke-linecap="round"/>
<!-- trimex -->
<path d="M880.6 44.5v14.4" stroke="#8e8e8e" stroke-width="2.2"/><path d="M870.8 51.6l6-5.2v3.6h7.6v-3.6l6 5.2-6 5.2v-3.6h-7.6v3.6z" fill="#9b9b9b" stroke="#858585" stroke-width=".7"/>
<!-- upgrade / downgrade -->
<path d="M913.5 42.2l8.8 9.8h-4.3v8h-9v-8h-4.3z" fill="url(#gd)" stroke="#7d7d7d" stroke-width=".8" stroke-linejoin="round"/>
<path d="M947 60.3l8.8-9.8h-4.3v-8.2h-9v8.2h-4.3z" fill="url(#gd)" stroke="#7d7d7d" stroke-width=".8" stroke-linejoin="round"/>
<!-- scale -->
<path d="M971.5 43h17v17.5h-17z" fill="none" stroke="#7b7b7b" stroke-width="1.6" stroke-dasharray="2.2 1.8"/><path d="M970.8 52h10.4v9h-10.4z" fill="#9a9a9a" stroke="#808080" stroke-width=".8"/><path d="M974.3 55h3.6v3.4h-3.6z" fill="#e6e6e6"/><path d="M980 48.5l4-3.5 4 .5.3 3.3-3.8 3.4z" fill="#8f8f8f"/>
<!-- edit -->
<path d="M1017 41.8l5.6 17.6-15 2.6z" fill="#7a7a7a" stroke="#646464" stroke-width=".8" stroke-linejoin="round"/><path d="M1003.5 45l5.4-3 7.6 12.6-1 4.3-4.4-1.3z" fill="#9f9f9f" stroke="#5f5f5f" stroke-width=".8" stroke-linejoin="round"/><path d="M1011.1 57.6l4.4 1.3 1-4.3z" fill="#f1f1f1"/><path d="M1005.3 44l7.6 12.6M1007.1 43l7.6 12.6" stroke="#6c6c6c" stroke-width=".6"/>
<!-- wire to bspline -->
<path d="M1037 47.5l7-5 5 5.3 6.5-4.8" fill="none" stroke="#8a8a8a" stroke-width="3.2" stroke-linejoin="round" stroke-linecap="round"/><path d="M1037 47.5l7-5 5 5.3 6.5-4.8" fill="none" stroke="#f4f4f4" stroke-width="1.5" stroke-linejoin="round" stroke-linecap="round"/>
<path d="M1037 58.5c3-4.5 6-4.5 9.5-1.5s6.5 2.5 9-1.5" fill="none" stroke="#8a8a8a" stroke-width="3.2" stroke-linecap="round"/><path d="M1037 58.5c3-4.5 6-4.5 9.5-1.5s6.5 2.5 9-1.5" fill="none" stroke="#f4f4f4" stroke-width="1.5" stroke-linecap="round"/>
<path d="M1043.6 50.2h6l-3 4.2z" fill="#8a8a8a"/>
<!-- add point / del point -->
<path d="M1070.3 57.2h19.7" stroke="#b0b0b0" stroke-width="2.9" stroke-linecap="round"/><path d="M1071 57h18.5" stroke="#e9e9e9" stroke-width=".9"/><g transform="translate(1079.8 57)"><circle cx=".6" cy=".8" r="2.6" fill="#a8a8a8" opacity=".5"/><circle r="2.5" fill="url(#ball)" stroke="#bcbcbc" stroke-width=".5"/></g>
<path d="M1079.5 42.6v9M1075 47.1h9" stroke="#8a8a8a" stroke-width="2.9"/>
<path d="M1103.5 56.2h19.3" stroke="#b0b0b0" stroke-width="2.9" stroke-linecap="round"/><path d="M1104 56h18.3" stroke="#e9e9e9" stroke-width=".9"/><g transform="translate(1113.3 55.7)"><circle cx=".6" cy=".8" r="2.6" fill="#a8a8a8" opacity=".5"/><circle r="2.5" fill="url(#ball)" stroke="#bcbcbc" stroke-width=".5"/></g>
<path d="M1109 46.5h9" stroke="#8a8a8a" stroke-width="2.9"/>
<!-- shape2dview -->
<path d="M1137 56.8l9.6 4.8 9.8-5.6-8-2.8z" fill="#f0f0f0" stroke="#8a8a8a" stroke-width="1.4" stroke-linejoin="round"/>
<path d="M1136 45.2l9-4.3 11.2 3.7v9l-10 4.8-10.2-4.4z" fill="#a8a8a8" stroke="#858585" stroke-width=".8" stroke-linejoin="round"/><path d="M1136 45.2l10.2 4 10-4.6-11.2-3.7z" fill="#bdbdbd"/><path d="M1136 45.2l10.2 4v9.2l-10.2-4.4z" fill="#8f8f8f"/>
<!-- overflow chevrons -->
<path d="M1190 49.6l2.6 2.5-2.6 2.5M1194 49.6l2.6 2.5-2.6 2.5" fill="none" stroke="#111" stroke-width="1.5"/>
</svg>
<!-- ===== snap toolbar (right) ===== -->
<div class="abs" style="left:1182px;top:74px;width:8px;height:4px;background:repeating-linear-gradient(90deg,#cfccc8 0 1px,transparent 1px 3px);"></div>
<div class="tbb dn" style="left:1175px;top:81px;width:22px;height:22px;"></div>
<div class="tbb" style="left:1175px;top:105px;width:22px;height:22px;"></div>
<div class="tbb" style="left:1175px;top:129px;width:22px;height:22px;"></div>
<div class="tbb dn" style="left:1175px;top:153px;width:22px;height:22px;"></div>
<div class="tbb" style="left:1175px;top:177px;width:22px;height:22px;"></div>
<div class="tbb" style="left:1175px;top:201px;width:22px;height:22px;"></div>
<div class="tbb dn" style="left:1175px;top:225px;width:22px;height:22px;"></div>
<div class="tbb" style="left:1175px;top:249px;width:22px;height:22px;"></div>
<div class="tbb dn" style="left:1175px;top:273px;width:22px;height:22px;"></div>
<div class="tbb" style="left:1175px;top:297px;width:22px;height:22px;"></div>
<div class="tbb" style="left:1175px;top:321px;width:22px;height:22px;"></div>
<div class="tbb" style="left:1175px;top:345px;width:22px;height:22px;"></div>
<div class="tbb" style="left:1175px;top:369px;width:22px;height:22px;"></div>
<div class="tbb" style="left:1175px;top:393px;width:22px;height:22px;"></div>
<svg style="left:1174px;top:81px" width="24" height="336" viewBox="0 0 24 336">
<g transform="translate(0 0)"><path d="M9.4 9.2V8a2.6 2.6 0 0 1 5.2 0v1.2" fill="none" stroke="#0a4f40" stroke-width="2.6"/><path d="M9.4 9.2V8a2.6 2.6 0 0 1 5.2 0v1.2" fill="none" stroke="#6fd8bd" stroke-width="1.1"/><rect x="7.4" y="8.9" width="9.2" height="8" rx="1" fill="#19b08c" stroke="#0a4f40" stroke-width=".9"/><path d="M8.3 11h7.4" stroke="#6fd8bd" stroke-width=".9"/></g>
<g transform="translate(0 24)"><path d="M5.4 16.3L18.9 5.9" fill="none" stroke="#0a4f40" stroke-width="3.4" stroke-linecap="butt" /><path d="M5.4 16.3L18.9 5.9" fill="none" stroke="#19b08c" stroke-width="2" stroke-linecap="butt" /><path d="M8.8 12.5l2.6-3.3 3.6-.6 1 3-2.6 3.3-3.6.6z" fill="#19b08c" stroke="#0a4f40" stroke-width=".9"/></g>
<g transform="translate(0 48)"><path d="M12 5.2V15.5M5.3 15.6H18.9" fill="none" stroke="#0a4f40" stroke-width="3.8" stroke-linecap="butt" /><path d="M12 5.2V15.5M5.3 15.6H18.9" fill="none" stroke="#19b08c" stroke-width="2.4" stroke-linecap="butt" /></g>
<g transform="translate(0 72)"><path d="M9.2 5.5V17.5M15.2 5.5V17.5M6.2 8.5H18.2M6.2 14.5H18.2" fill="none" stroke="#0a4f40" stroke-width="4" stroke-linecap="round" /><path d="M9.2 5.5V17.5M15.2 5.5V17.5M6.2 8.5H18.2M6.2 14.5H18.2" fill="none" stroke="#19b08c" stroke-width="2.6" stroke-linecap="round" /></g>
<g transform="translate(0 96)"><path d="M7.2 6.6L17.2 16.4M17.2 6.6L7.2 16.4" fill="none" stroke="#0a4f40" stroke-width="4.2" stroke-linecap="round" /><path d="M7.2 6.6L17.2 16.4M17.2 6.6L7.2 16.4" fill="none" stroke="#19b08c" stroke-width="2.8" stroke-linecap="round" /></g>
<g transform="translate(0 120)"><path d="M8.8 6.3L19 11.7M6 10.6L16.4 16.2" fill="none" stroke="#0a4f40" stroke-width="3.6" stroke-linecap="butt" /><path d="M8.8 6.3L19 11.7M6 10.6L16.4 16.2" fill="none" stroke="#19b08c" stroke-width="2.2" stroke-linecap="butt" /></g>
<g transform="translate(0 144)"><path d="M9 13.8L18 6.2" fill="none" stroke="#0a4f40" stroke-width="3.4" stroke-linecap="butt" /><path d="M9 13.8L18 6.2" fill="none" stroke="#19b08c" stroke-width="2" stroke-linecap="butt" /><circle cx="8.2" cy="14.4" r="2.9" fill="#19b08c" stroke="#0a4f40" stroke-width=".9"/></g>
<g transform="translate(0 168)"><path d="M12 5.8l5.4 5.5L12 16.8l-5.4-5.5z" fill="#f4fbf9" stroke="#0a4f40" stroke-width="1.4"/><circle cx="12" cy="6.2" r="2.3" fill="#19b08c" stroke="#0a4f40" stroke-width=".8"/><circle cx="17.1" cy="11.3" r="2.3" fill="#19b08c" stroke="#0a4f40" stroke-width=".8"/><circle cx="12" cy="16.4" r="2.3" fill="#19b08c" stroke="#0a4f40" stroke-width=".8"/><circle cx="6.9" cy="11.3" r="2.3" fill="#19b08c" stroke="#0a4f40" stroke-width=".8"/></g>
<g transform="translate(0 192)"><circle cx="12" cy="11.1" r="5.7" fill="#f4fbf9" stroke="#0a4f40" stroke-width="2.6"/><circle cx="12" cy="11.1" r="5.7" fill="none" stroke="#19b08c" stroke-width="1.2"/><circle cx="12" cy="11.1" r="2.3" fill="#f4fbf9" stroke="#0a4f40" stroke-width="1.7"/></g>
<g transform="translate(0 216)"><circle cx="7" cy="11.3" r="2.1" fill="#19b08c" stroke="#0a4f40" stroke-width=".8"/><circle cx="12" cy="11.3" r="2.1" fill="#19b08c" stroke="#0a4f40" stroke-width=".8"/><circle cx="17.2" cy="11.3" r="2.1" fill="#19b08c" stroke="#0a4f40" stroke-width=".8"/></g>
<g transform="translate(0 240)"><path d="M6.4 10.8L16 16.6" fill="none" stroke="#0a4f40" stroke-width="3.4" stroke-linecap="butt" /><path d="M6.4 10.8L16 16.6" fill="none" stroke="#19b08c" stroke-width="2" stroke-linecap="butt" /><circle cx="15.2" cy="7.8" r="1.9" fill="#19b08c" stroke="#0a4f40" stroke-width=".8"/></g>
<g transform="translate(0 264)"><path d="M12.2 6.8V15.2M8 11H16.4" fill="none" stroke="#0a4f40" stroke-width="3.6" stroke-linecap="round" /><path d="M12.2 6.8V15.2M8 11H16.4" fill="none" stroke="#19b08c" stroke-width="2.2" stroke-linecap="round" /></g>
<g transform="translate(0 288)"><path d="M9.5 9.5h7v3.5M9.5 9.5v7.5h3" fill="none" stroke="#0a4f40" stroke-width="1.5"/><path d="M10 6.5h7.5M11 5v3M13.2 5v3M15.4 5v3M17.2 5v3M6.5 10v7M5 11.5h3M5 13.5h3M5 15.5h3" stroke="#128a6c" stroke-width=".9"/></g>
<g transform="translate(0 312)"><rect x="6.6" y="5.4" width="11.6" height="11.6" fill="#19b08c" stroke="#0a4f40" stroke-width="1"/><circle cx="10" cy="13" r="1.5" fill="none" stroke="#0a4f40" stroke-width=".9"/></g>
</svg>
</body>
</html>
